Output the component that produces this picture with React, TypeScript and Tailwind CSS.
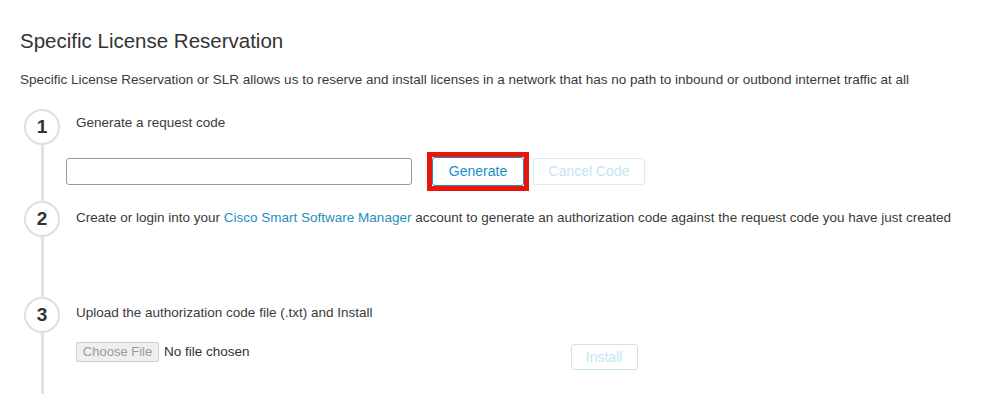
import React from 'react';

function StepCircle({ n }: { n: number }) {
  return (
    <div className="flex h-[36px] w-[36px] shrink-0 items-center justify-center rounded-full border-2 border-[#dfdfdf] bg-white text-[19px] font-bold text-[#333]">
      {n}
    </div>
  );
}

export default function App() {
  return (
    <div className="h-[394px] w-[999px] overflow-hidden bg-white pl-[20px] pt-[29px] font-['Liberation_Sans',Arial,sans-serif] text-[#3a3a3a]">
      <h1 className="text-[20.5px] leading-[24px] text-[#333]">Specific License Reservation</h1>
      <p className="mt-[19px] text-[13.5px] leading-[16px]">
        Specific License Reservation or SLR allows us to reserve and install licenses in a network that has no path to inbound or outbond internet traffic at all
      </p>

      <div className="relative mt-[21px]">
        {/* vertical connector */}
        <div className="absolute left-[21px] top-[20px] h-[300px] w-[3px] bg-[#e3e3e3]" />

        {/* step 1 */}
        <div className="relative flex items-start gap-[16px] pl-[4px]">
          <StepCircle n={1} />
          <div className="pt-[6px]">
            <p className="text-[13.5px] leading-[16px]">Generate a request code</p>
            <div className="-ml-[10px] mt-[21px] flex items-center">
              <input className="h-[27px] w-[346px] rounded-[3px] border border-[#999] bg-white" />
              <div className="ml-[15px] border-[5px] border-[#e8170b]">
                <button className="h-[29px] w-[92px] rounded-[3px] border border-[#1d8fc5] bg-white text-[14px] text-[#1d8fc5]">
                  Generate
                </button>
              </div>
              <button className="ml-[4px] h-[27px] w-[112px] rounded-[3px] border border-[#d3ecf6] bg-white text-[14px] text-[#c5e5f2]">
                Cancel Code
              </button>
            </div>
          </div>
        </div>

        {/* step 2 */}
        <div className="relative mt-[10px] flex items-start gap-[16px] pl-[4px]">
          <StepCircle n={2} />
          <p className="pt-[9px] text-[13.5px] leading-[16px]">
            Create or login into your <span className="text-[#1d8fc5]">Cisco Smart Software Manager</span> account to generate an authorization code against the request code you have just created
          </p>
        </div>

        {/* step 3 */}
        <div className="relative mt-[60px] flex items-start gap-[16px] pl-[4px]">
          <StepCircle n={3} />
          <div className="pt-[8px]">
            <p className="text-[13.5px] leading-[16px]">Upload the authorization code file (.txt) and Install</p>
            <div className="mt-[21px] flex items-start">
              <span className="flex h-[20px] w-[83px] items-center justify-center rounded-[2px] border border-[#cfcfcf] bg-[#efefef] text-[13px] text-[#9a9a9a]">
                Choose File
              </span>
              <span className="ml-[5px] text-[13.5px] leading-[20px] text-[#333]">No file chosen</span>
              <button className="ml-[321px] mt-[2px] h-[26px] w-[67px] rounded-[3px] border border-[#c9e6f3] bg-white text-[14px] text-[#c5e5f2]">
                Install
              </button>
            </div>
          </div>
        </div>
      </div>
    </div>
  );
}
